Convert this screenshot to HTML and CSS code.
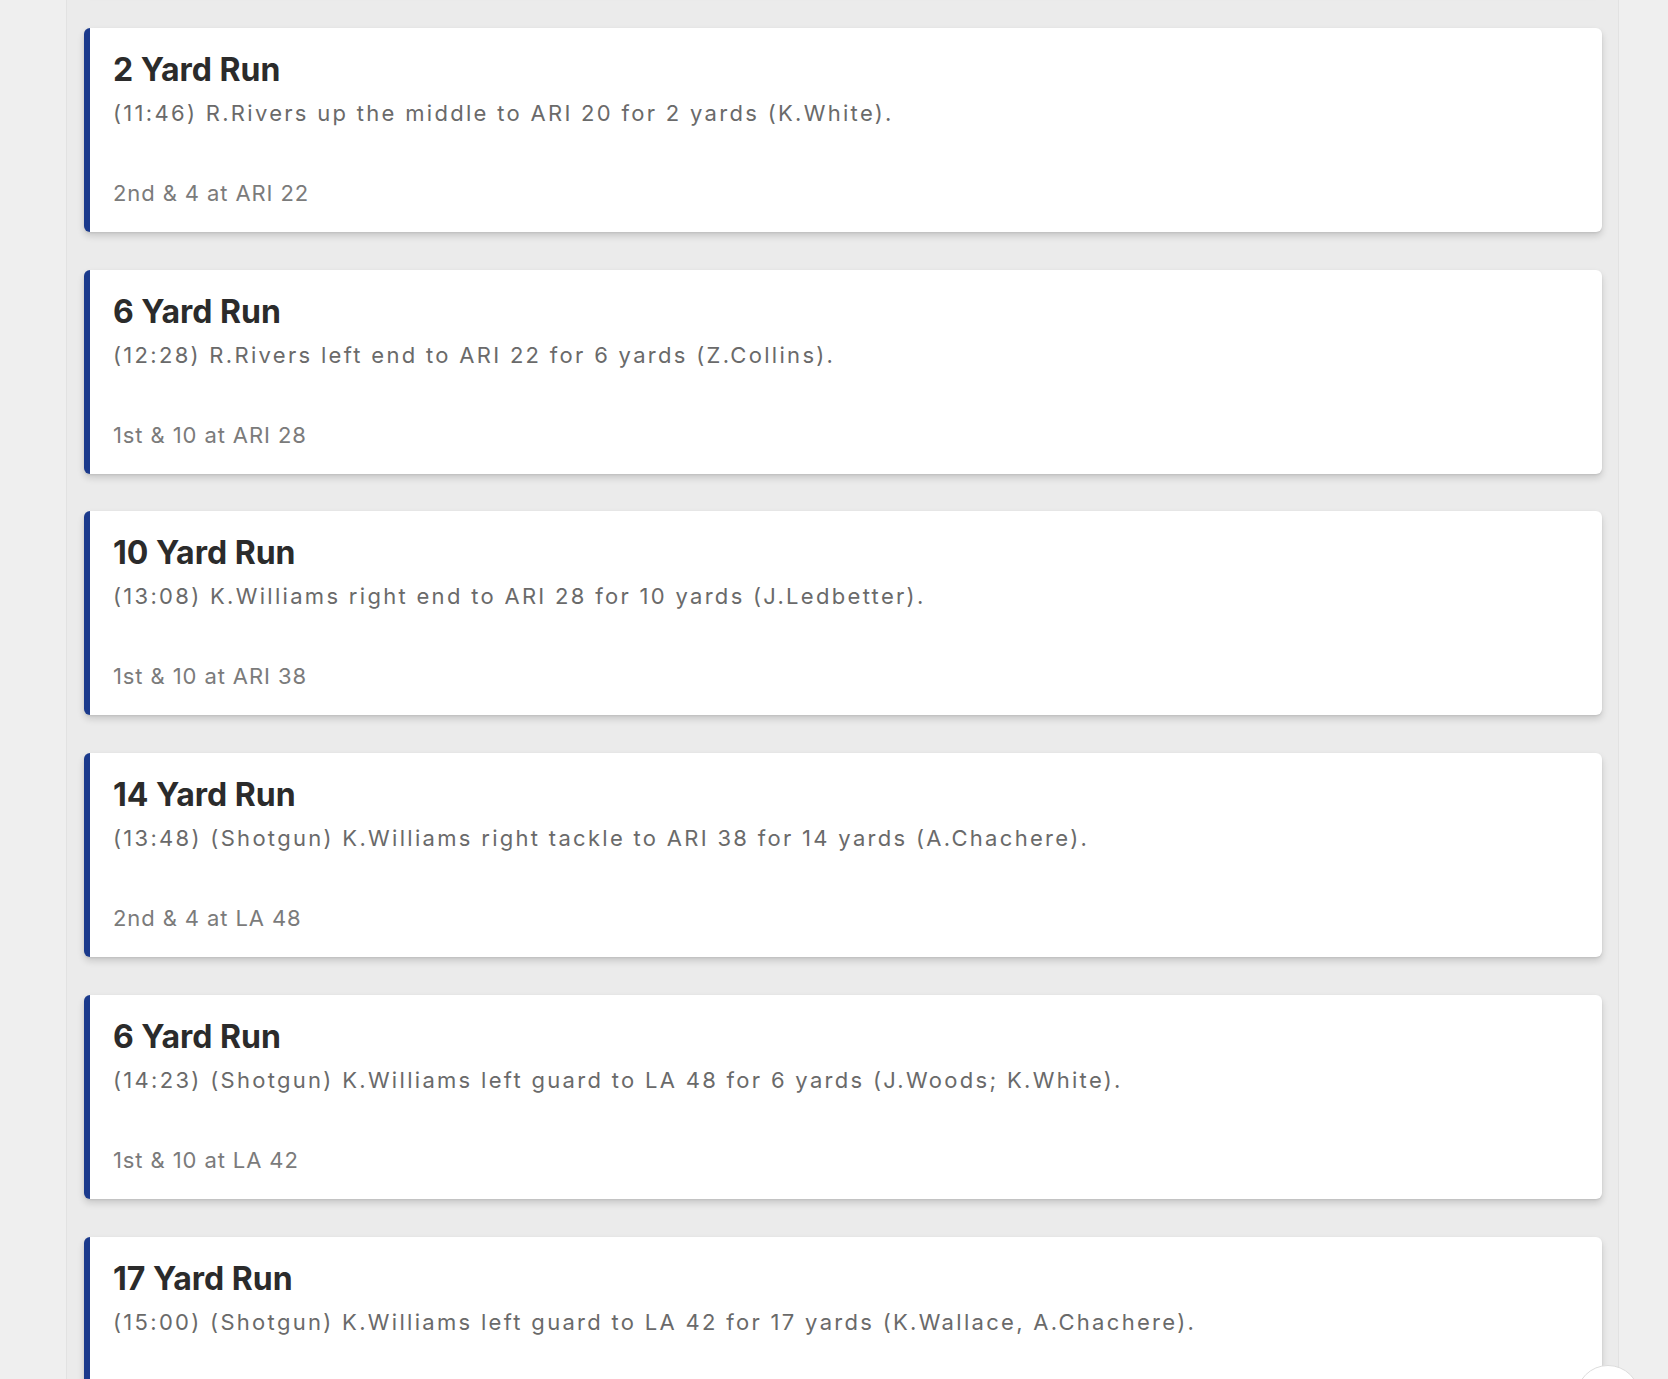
FILE: index.html
```html
<!DOCTYPE html>
<html lang="en">
  <head>
    <meta charset="UTF-8" />
    <meta name="viewport" content="width=device-width, initial-scale=1.0" />
    <title>Play by Play</title>
    <link rel="stylesheet" href="styles.css">
  </head>
  <body>
    <div class="feed">
      <div class="play">
        <div class="play-title">3 Yard Pass</div>
        <div class="play-desc">(11:02) K.Murray pass short right to R.Rivers for 3 yards.</div>
        <div class="play-down">3rd &amp; 2 at ARI 20</div>
      </div>

      <div class="play">
        <div class="play-title">2 Yard Run</div>
        <div class="play-desc">(11:46) R.Rivers up the middle to ARI 20 for 2 yards (K.White).</div>
        <div class="play-down">2nd &amp; 4 at ARI 22</div>
      </div>

      <div class="play">
        <div class="play-title">6 Yard Run</div>
        <div class="play-desc">(12:28) R.Rivers left end to ARI 22 for 6 yards (Z.Collins).</div>
        <div class="play-down">1st &amp; 10 at ARI 28</div>
      </div>

      <div class="play">
        <div class="play-title">10 Yard Run</div>
        <div class="play-desc">(13:08) K.Williams right end to ARI 28 for 10 yards (J.Ledbetter).</div>
        <div class="play-down">1st &amp; 10 at ARI 38</div>
      </div>

      <div class="play">
        <div class="play-title">14 Yard Run</div>
        <div class="play-desc">(13:48) (Shotgun) K.Williams right tackle to ARI 38 for 14 yards (A.Chachere).</div>
        <div class="play-down">2nd &amp; 4 at LA 48</div>
      </div>

      <div class="play">
        <div class="play-title">6 Yard Run</div>
        <div class="play-desc">(14:23) (Shotgun) K.Williams left guard to LA 48 for 6 yards (J.Woods; K.White).</div>
        <div class="play-down">1st &amp; 10 at LA 42</div>
      </div>

      <div class="play">
        <div class="play-title">17 Yard Run</div>
        <div class="play-desc">(15:00) (Shotgun) K.Williams left guard to LA 42 for 17 yards (K.Wallace, A.Chachere).</div>
        <div class="play-down">1st &amp; 10 at LA 25</div>
      </div>
    </div>

    <button class="scroll-top" aria-label="Back to top"></button>
  </body>
</html>
```

FILE: styles.css
```css
body {
  font-family: Inter, Roboto, "Liberation Sans", sans-serif;
  background-color: #efefef;
  margin: 0;
  padding: 0;
  overflow: hidden;
}

/* list column, scrolled so the previous play is just out of view */
.feed {
  width: 1518px;
  margin: -214px 0 0 66px;
  padding: 0 16px 0 17px;
  background-color: #ebebeb;
  border-left: 1px solid #e2e2e2;
  border-right: 1px solid #e2e2e2;
  display: flex;
  flex-direction: column;
  gap: 37.8px;
}

.play {
  background-color: white;
  border-left: 6px solid #1b3a8c;
  border-radius: 6px;
  box-shadow: 0 4px 7px rgba(0, 0, 0, 0.15), 0 1px 2px rgba(0, 0, 0, 0.08);
  padding: 23px 30px 24px 23px;
}

.play-title {
  font-size: 32px;
  line-height: 38px;
  font-weight: 700;
  color: #2b2b2b;
}

.play-desc {
  margin-top: 9px;
  font-size: 22px;
  line-height: 30px;
  letter-spacing: 2.3px;
  color: #6a6a6a;
}

.play-down {
  margin-top: 50px;
  font-size: 22px;
  line-height: 30px;
  letter-spacing: 0.9px;
  color: #7b7b7b;
}

.scroll-top {
  position: fixed;
  right: 28px;
  bottom: -50px;
  width: 64px;
  height: 64px;
  border-radius: 50%;
  border: 1px solid #dcdcdc;
  background-color: white;
  padding: 0;
}
```
